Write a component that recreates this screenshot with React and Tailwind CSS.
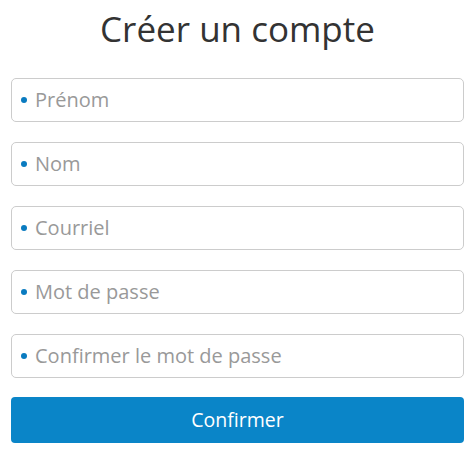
import React from 'react';

const fields = ['Prénom', 'Nom', 'Courriel', 'Mot de passe', 'Confirmer le mot de passe'];

const Field = ({ label }) => (
    <div className="relative h-[44px] rounded-[5px] border border-[#cccccc] bg-white flex items-center pl-[23px]">
        <span className="absolute left-[9px] top-[18px] w-[6px] h-[6px] rounded-full bg-[#0a7bc0]" />
        <span className="text-[20px] text-[#999999]">{label}</span>
    </div>
);

const App = () => {
    return (
        <div className="w-[475px] h-[455px] bg-white px-[11px]" style={{ fontFamily: '"Open Sans", sans-serif' }}>
            <h1 className="text-[35px] leading-[50px] text-[#333333] text-center pt-[4px] mb-[24px]">Créer un compte</h1>
            <div className="flex flex-col gap-[20px]">
                {fields.map((f) => (
                    <Field key={f} label={f} />
                ))}
            </div>
            <button className="mt-[19px] w-full h-[46px] rounded-[4px] bg-[#0a85c8] text-white text-[19.5px]">
                Confirmer
            </button>
        </div>
    );
};

export default App;
